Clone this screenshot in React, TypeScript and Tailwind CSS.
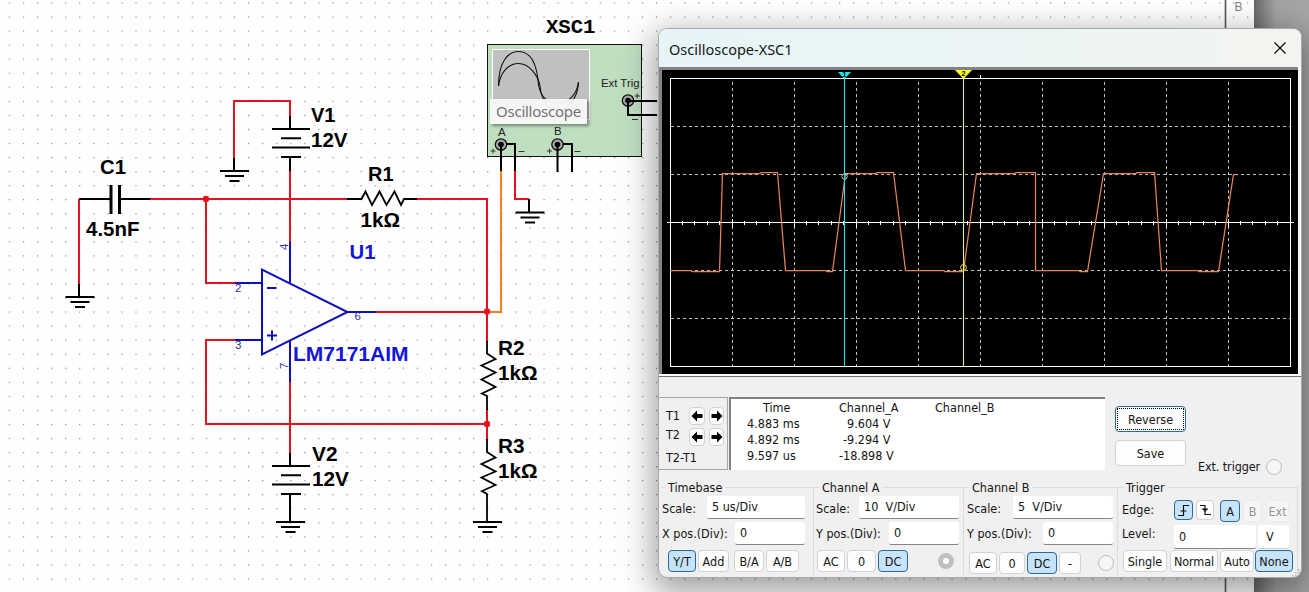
import type { ReactNode } from "react";

const RED = "#e0141e";
const BLUE = "#1010b8";

function Ground({ x, y }: { x: number; y: number }) {
  return <path d={`M${x - 14.5} ${y}h29M${x - 9.5} ${y + 5}h19M${x - 5} ${y + 10}h10`} stroke="#000" strokeWidth="2" />;
}

function Battery({ x, y }: { x: number; y: number }) {
  return <path d={`M${x - 18} ${y}h38M${x - 9} ${y + 9.3}h20M${x - 18} ${y + 18.6}h38M${x - 9} ${y + 28}h20`} stroke="#000" strokeWidth="2" />;
}

function Label({ x, y, w, fill = "#000", children }: { x: number; y: number; w: number; fill?: string; children: string }) {
  return (
    <text x={x} y={y} textLength={w} lengthAdjust="spacingAndGlyphs" fill={fill} className="font-['Liberation_Sans',sans-serif] text-[20.5px] font-bold">
      {children}
    </text>
  );
}

function Terminal({ x, y }: { x: number; y: number }) {
  return (
    <g>
      <circle cx={x} cy={y} r="5.7" fill="#a8a8a8" stroke="#111" strokeWidth="1.3" />
      <circle cx={x} cy={y} r="2.8" fill="#000" />
    </g>
  );
}

function Schematic() {
  return (
    <svg width="1309" height="592" className="absolute left-0 top-0" fill="none">
      <defs>
        <pattern id="dots" x="8.8" y="2.4" width="14.07" height="14.05" patternUnits="userSpaceOnUse">
          <rect width="1.2" height="1.2" fill="#868686" />
        </pattern>
        <linearGradient id="edge">
          <stop offset="0" stopColor="#686868" />
          <stop offset="0.4" stopColor="#a2a2a2" />
          <stop offset="1" stopColor="#a6a6a6" />
        </linearGradient>
      </defs>
      <rect width="1254" height="592" fill="url(#dots)" />
      <path d="M1225.5 0V592" stroke="#555" strokeWidth="1.6" />
      <rect x="1254" width="55" height="592" fill="url(#edge)" />
      <text x="1234.5" y="10.8" fill="#808080" className="font-['Liberation_Sans',sans-serif] text-[12px]">B</text>

      <g stroke={RED} strokeWidth="2">
        <path d="M79 199V285M150 199H348M206 199V283H235M234 158V101H290V116M290 171V242M417 199H487V342" />
        <path d="M376 312H487M235 340H206V424H487M290 382V454M487 409V440M515 171V199H529" />
      </g>
      <path d="M501 171V312H487" stroke="#f08020" strokeWidth="2" />
      <g fill="#e8101c">
        <circle cx="206" cy="199" r="3.2" />
        <circle cx="487" cy="311.5" r="3.2" />
        <circle cx="487" cy="424" r="3.2" />
      </g>

      <g stroke="#000" strokeWidth="2">
        <path d="M79 199H111M119 199H150M79 284V297M234 158V171M290 116V129M290 157V171M529 199V212" />
        <path d="M111 185V214M119.5 185V214" strokeWidth="3" />
        <path d="M347 199H361.5L365.5 191.5L372 205L379.5 191.5L386.5 205L394.5 191.5L401 205L404 199H417" strokeWidth="1.8" />
        <path d="M487 341V353.5L495.5 359L481.5 365.5L495.5 372.5L481.5 379.5L495.5 387L482 393.5L487 396V410" strokeWidth="1.8" />
        <path d="M487 439V452L495.5 457.5L481.5 464L495.5 471.5L481.5 477.5L495.5 485L482 491L487 494V522" strokeWidth="1.8" />
        <path d="M290 453V466M290 494V522" />
      </g>
      <Ground x={80} y={297} />
      <Ground x={234.5} y={171} />
      <Ground x={530} y={212.5} />
      <Ground x={290.5} y={522} />
      <Ground x={487.5} y={522} />
      <Battery x={290} y={129} />
      <Battery x={290} y={466} />

      <g stroke={BLUE} strokeWidth="2">
        <path d="M262 269.5V354.5L347.5 312Z" />
        <path d="M290 242V283M235 283H262M235 340H262M347 312H376M290 341V382M267 288H276.5M267 335.5H277M272 330.5V340.5" />
      </g>
      <g fill="#3030a0" className="font-['Liberation_Sans',sans-serif] text-[11.5px]">
        <text x="235" y="292">2</text>
        <text x="235" y="349">3</text>
        <text x="354.500" y="320">6</text>
        <text transform="translate(288 250) rotate(-90)">4</text>
        <text transform="translate(288 369) rotate(-90)">7</text>
      </g>

      <Label x={100} y={173.5} w={26}>C1</Label>
      <Label x={86} y={236} w={53.5}>4.5nF</Label>
      <Label x={311} y={122} w={24.5}>V1</Label>
      <Label x={311} y={147} w={36.5}>12V</Label>
      <Label x={368} y={181} w={25.5}>R1</Label>
      <Label x={360.5} y={226.500} w={39.5}>1kΩ</Label>
      <Label x={349.5} y={259} w={26} fill="#1414dc">U1</Label>
      <Label x={293} y={361} w={115.5} fill="#1414dc">LM7171AIM</Label>
      <Label x={498} y={355} w={26.5}>R2</Label>
      <Label x={498} y={379.5} w={39.5}>1kΩ</Label>
      <Label x={498} y={453} w={26.5}>R3</Label>
      <Label x={498} y={478} w={39.5}>1kΩ</Label>
      <Label x={312} y={461} w={25.5}>V2</Label>
      <Label x={312} y={486} w={37}>12V</Label>
      <text x="546" y="33" textLength="49.5" lengthAdjust="spacingAndGlyphs" fill="#000" className="font-['Liberation_Mono',monospace] text-[19.5px] font-bold">XSC1</text>

      <rect x="487.5" y="44.5" width="154" height="112" fill="#c0dfc1" stroke="#111" />
      <rect x="492.500" y="49.500" width="97" height="70" fill="#c0c0c0" stroke="#fff" />
      <g stroke="#111" strokeWidth="1.1">
        <path d="M498.500 86C498.500 62 508 51.500 518.500 51.500C530 51.500 537 63 538.500 85C540 93 544 103 558 103C570 103 577 93 578.500 82" />
        <path d="M498.500 86C500 73 508 63.500 518.500 63.500C529 63.500 538 75 540 86C541 100 550 112 560 110C572 106 578 95 578.500 82" />
      </g>
      <g fill="#222" className="font-['Liberation_Sans',sans-serif] text-[11.5px]">
        <text x="601" y="87" textLength="38.5" lengthAdjust="spacingAndGlyphs">Ext Trig</text>
        <text x="498" y="136">A</text>
        <text x="554" y="134.500">B</text>
      </g>
      <Terminal x={501} y={144.5} />
      <Terminal x={557.5} y={144.5} />
      <Terminal x={628} y={100.500} />
      <g stroke="#000" strokeWidth="2">
        <path d="M501 144V171M506 144H515V171M557.500 144V172M563 144H572V172M628 101H657M628 101V115H657" />
      </g>
      <path d="M490.500 151H495.500M493 148.500V153.500M518.500 151.500H524.500M547 151H552M549.500 148.500V153.500M574.500 151.500H580.500M634.500 96H640M637.200 93.500V98.500M632 119.500H638" stroke="#333" strokeWidth="1" />
    </svg>
  );
}

const TRACE =
  "670,270.5 691,270.5 692,271.5 719.5,271.5 722.5,173.5 760,173.5 761,172.5 777.5,172.5 785.5,270.5 826,270.5 827,271.5 832.5,271.5 845.5,173.5 876,173.5 877,172.5 893.5,172.5 905.5,270.5 944,270.5 945,271.5 963.5,271.5 976.5,173.5 1015,173.5 1016,172.5 1035.5,172.5 1035.5,270.5 1079,270.5 1080,271.5 1087.5,271.5 1103.5,173.5 1136,173.5 1137,172.5 1154.5,172.5 1161.5,270.5 1198,270.5 1199,271.5 1218.5,271.5 1233.5,174.5 1236,174.5";

const COLS = [732.5, 794.5, 856.5, 918.5, 980.5, 1042.5, 1104.5, 1166.5, 1228.5];
const ROWS = [126.5, 174.5, 270.5, 318.5];
const TICKS = Array.from({ length: 49 }, (_, i) => i + 1);

function Screen() {
  return (
    <svg width="636" height="304" viewBox="662 70 636 304" className="block bg-black" fill="none">
      <g stroke="#c0c0c0" strokeWidth="1" strokeDasharray="3 3">
        {COLS.map((x) => <path key={x} d={`M${x} 82V366`} />)}
        {ROWS.map((y) => <path key={y} d={`M671 ${y}H1290`} />)}
      </g>
      <rect x="670.5" y="78.500" width="620" height="288" stroke="#fff" />
      <path d="M667 222.500H1294M980.500 75V79" stroke="#fff" />
      {TICKS.map((i) => (
        <path key={i} d={`M${Math.floor(670 + i * 12.4) + 0.5} ${i % 5 ? "221V225" : "219V227"}`} stroke="#fff" />
      ))}
      <polyline points={TRACE} stroke="#e4855c" strokeWidth="1.25" />
      <path d="M844.500 78V366" stroke="#3cd6dc" strokeWidth="1.1" />
      <path d="M963.500 78V366" stroke="#ecec86" strokeWidth="1.1" />
      <path d="M838 72H851L844.500 79Z" fill="#20e8e8" />
      <path d="M955 70H972L963.500 79Z" fill="#ffff20" />
      <g fill="#000" className="font-['Liberation_Sans',sans-serif] text-[7px] font-bold">
        <text x="842.500" y="77">1</text>
        <text x="961.500" y="76">2</text>
      </g>
      <circle cx="844.500" cy="176.500" r="2.700" stroke="#a8d4d4" />
      <circle cx="963.500" cy="267.500" r="2.900" stroke="#e8e820" />
    </svg>
  );
}

function Btn({ on, off, className, children }: { on?: boolean; off?: boolean; className: string; children: ReactNode }) {
  const look = on
    ? "border-[#2a6a98] bg-[#c6e3fa]"
    : off
      ? "border-[#ececec] bg-[#f5f5f5] text-[#969696]"
      : "border-[#d2d2d2] bg-[#fdfdfd]";
  return <button className={`flex shrink-0 items-center justify-center rounded-[4px] border pt-px whitespace-pre ${look} ${className}`}>{children}</button>;
}

function Field({ className, children }: { className: string; children: ReactNode }) {
  return <div className={`flex shrink-0 items-center rounded-[2px] border-b border-[#868686] bg-white pl-[5px] whitespace-pre ${className}`}>{children}</div>;
}

function Group({ title, className, titleClass, children }: { title: string; className: string; titleClass: string; children: ReactNode }) {
  return (
    <section className={`flex h-[96px] shrink-0 flex-col ${className}`}>
      <div className="flex h-[16px] items-center">
        <i className={`h-px bg-[#dcdcdc] ${titleClass}`} />
        <span className="px-[3px] pt-px">{title}</span>
        <i className="h-px flex-1 bg-[#dcdcdc]" />
      </div>
      <div className="-mt-2 flex flex-1 flex-col border-r border-[#dcdcdc] pt-2">{children}</div>
    </section>
  );
}

function Arrow({ flip }: { flip?: boolean }) {
  return (
    <svg width="12" height="12" viewBox="0 0 12 12" className={flip ? "-scale-x-100" : ""}>
      <path d="M0.500 6L6 0.500V4H11.500V8H6V11.500Z" fill="#000" />
    </svg>
  );
}

function ArrowPair() {
  return (
    <div className="flex gap-1">
      <Btn className="h-[18px] w-[16px] pt-0!"><Arrow /></Btn>
      <Btn className="h-[18px] w-[15px] pt-0!"><Arrow flip /></Btn>
    </div>
  );
}

function Scope() {
  return (
    <div className="absolute left-[659px] top-[29px] flex h-[548px] w-[642px] flex-col overflow-hidden rounded-[8px] bg-[#f0f0f0] font-['DejaVu_Sans_Condensed','DejaVu_Sans',sans-serif] text-[12.5px] leading-[16px] tracking-[0px] text-[#151515] [font-stretch:condensed] shadow-[0_0_0_1px_#a5abac,0_10px_32px_6px_rgba(0,0,0,0.36)]">
      <header className="flex h-[38px] shrink-0 items-center justify-between bg-linear-to-r from-[#e7f5f8] via-[#ebf5f5] to-[#f3f4ef] pl-[10px] pr-[14px]">
        <span className="pt-px font-['Noto_Sans',sans-serif] text-[14.5px] leading-5 tracking-[0px]">Oscilloscope-XSC1</span>
        <svg width="14" height="14" viewBox="0 0 14 14"><path d="M1.500 1.500L12.500 12.500M12.500 1.500L1.500 12.500" stroke="#111" strokeWidth="1.300" /></svg>
      </header>
      <div className="h-[310px] shrink-0 border-b border-[#707070] bg-[#f8f8f8]">
        <div className="h-[307px] w-[639px] border-l-[3px] border-t-[3px] border-[#848484]"><Screen /></div>
      </div>

      <div className="flex h-[103px] shrink-0 pt-[20px]">
        <div className="flex h-[73px] w-[69px] shrink-0 border border-l-0 border-[#a6a6a6]">
          <div className="flex w-[30px] shrink-0 flex-col pl-[7px] pt-[10px] whitespace-nowrap">
            <span>T1</span><span className="mt-[3px]">T2</span><span className="mt-[7px]">T2-T1</span>
          </div>
          <div className="flex flex-col gap-[3px] pt-[9px]"><ArrowPair /><ArrowPair /></div>
        </div>
        <div className="ml-[1px] flex h-[73px] w-[376px] shrink-0 border-l-2 border-t-2 border-[#808080] bg-white pt-px whitespace-pre">
          <div className="ml-[16px] flex w-[92px] flex-col"><span className="pl-[16px]">Time</span><span>4.883 ms</span><span>4.892 ms</span><span>9.597 us</span></div>
          <div className="flex w-[96px] flex-col"><span>Channel_A</span><span className="pl-[8px]">9.604 V</span><span className="pl-[4px]">-9.294 V</span><span>-18.898 V</span></div>
          <div>Channel_B</div>
        </div>
        <div className="ml-[10px] flex flex-col gap-[8px] pt-[9px]">
          <button className="flex h-[26px] w-[71px] items-center justify-center rounded-[4px] border border-[#286c98] bg-[#fdfdfd] p-px">
            <span className="flex h-full w-full items-center justify-center border border-dotted border-black pt-px">Reverse</span>
          </button>
          <Btn className="h-[26px] w-[71px]">Save</Btn>
        </div>
        <div className="ml-[12px] flex h-[16px] items-center gap-[6px] self-start mt-[62px] whitespace-nowrap">
          <span className="w-[62px] tracking-[-0.1px]">Ext. trigger</span>
          <i className="size-[16px] rounded-full border border-[#bdbdbd] bg-[#f6f6f6]" />
        </div>
      </div>

      <div className="flex pl-[1px] -mt-px">
        <Group title="Timebase" className="w-[154px]" titleClass="ml-[2px] w-[3px]">
          <div className="flex items-center pl-[2px] pt-px"><span className="w-[45px] pt-[3px]">Scale:</span><Field className="h-[23px] w-[98px]">5 us/Div</Field></div>
          <div className="mt-[3px] flex items-center pl-[2px]"><span className="w-[73px] whitespace-nowrap">X pos.(Div):</span><Field className="h-[23px] w-[70px]">0</Field></div>
          <div className="mt-[5px] flex pl-[8px]">
            <Btn on className="h-[22px] w-[28px]">Y/T</Btn>
            <Btn className="ml-[2px] h-[22px] w-[31px]">Add</Btn>
            <Btn className="ml-[5px] h-[22px] w-[30px]">B/A</Btn>
            <Btn className="ml-[2px] h-[22px] w-[33px]">A/B</Btn>
          </div>
        </Group>
        <Group title="Channel A" className="w-[150px]" titleClass="w-[5px]">
          <div className="flex items-center pl-[2px] pt-px"><span className="w-[43px] pt-[3px]">Scale:</span><Field className="h-[23px] w-[100px]">10  V/Div</Field></div>
          <div className="mt-[3px] flex items-center pl-[2px]"><span className="w-[73px] whitespace-nowrap">Y pos.(Div):</span><Field className="h-[23px] w-[70px]">0</Field></div>
          <div className="mt-[5px] flex items-center pl-[3px]">
            <Btn className="h-[22px] w-[28px]">AC</Btn>
            <Btn className="ml-[2px] h-[22px] w-[29px]">0</Btn>
            <Btn on className="ml-[2px] h-[22px] w-[30px]">DC</Btn>
            <i className="ml-[30px] size-[16px] rounded-full border-[5px] border-[#bfbfbf] bg-white" />
          </div>
        </Group>
        <Group title="Channel B" className="w-[154px]" titleClass="w-[5px]">
          <div className="flex items-center pl-[3px] pt-px"><span className="w-[46px] pt-[3px]">Scale:</span><Field className="h-[23px] w-[100px]">5  V/Div</Field></div>
          <div className="mt-[3px] flex items-center pl-[3px]"><span className="w-[76px] whitespace-nowrap">Y pos.(Div):</span><Field className="h-[23px] w-[70px]">0</Field></div>
          <div className="mt-[7px] flex items-center pl-[5px]">
            <Btn className="h-[22px] w-[28px]">AC</Btn>
            <Btn className="ml-[2px] h-[22px] w-[26px]">0</Btn>
            <Btn on className="ml-[2px] h-[22px] w-[30px]">DC</Btn>
            <Btn className="ml-[2px] h-[22px] w-[22px]">-</Btn>
            <i className="ml-[17px] size-[16px] shrink-0 rounded-full border border-[#bdbdbd] bg-[#f6f6f6]" />
          </div>
        </Group>
        <Group title="Trigger" className="w-[180px]" titleClass="w-[5px]">
          <div className="flex items-start pl-[4px] pt-[5px]">
            <span className="w-[52px] pt-[2px]">Edge:</span>
            <Btn on className="h-[20px] w-[19px] pt-0!">
              <svg width="13" height="13" viewBox="0 0 13 13" fill="none" stroke="#111" strokeWidth="1.200"><path d="M1 11.500H6.500V1.500H12M3.500 7H9.500" /></svg>
            </Btn>
            <Btn className="ml-[3px] h-[20px] w-[18px] pt-0!">
              <svg width="13" height="13" viewBox="0 0 13 13" fill="none" stroke="#111" strokeWidth="1.200"><path d="M1 1.500H6V10.500H12M3 5H9" /><path d="M3.500 5H8.500L6 8Z" fill="#111" stroke="none" /></svg>
            </Btn>
            <Btn on className="ml-[6px] h-[22px] w-[20px]">A</Btn>
            <Btn off className="ml-[3px] h-[22px] w-[19px]">B</Btn>
            <Btn off className="ml-[4px] h-[22px] w-[23px]">Ext</Btn>
          </div>
          <div className="mt-[3px] flex items-center pl-[4px]">
            <span className="w-[52px] pb-[6px]">Level:</span>
            <Field className="h-[24px] w-[82px]">0</Field>
            <Field className="ml-[2px] h-[24px] w-[31px] border-[#d0d0d0]! pl-[8px]!">V</Field>
          </div>
          <div className="mt-px flex pl-[5px]">
            <Btn className="h-[22px] w-[44px]">Single</Btn>
            <Btn className="ml-[3px] h-[22px] w-[48px] tracking-[-0.15px]">Normal</Btn>
            <Btn className="ml-[2px] h-[22px] w-[34px] tracking-[-0.15px]">Auto</Btn>
            <Btn on className="ml-px h-[22px] w-[38px]">None</Btn>
          </div>
        </Group>
      </div>
      <svg width="9" height="9" className="absolute bottom-0 right-0" fill="#b4b4b4">
        <path d="M6 1h1.500v1.500H6zM3 4h1.500v1.500H3zM6 4h1.500v1.500H6zM0 7h1.500v1.500H0zM3 7h1.500v1.500H3z" />
      </svg>
    </div>
  );
}

export default function App() {
  return (
    <main className="relative h-[592px] w-[1309px] overflow-hidden bg-[#fefefe]">
      <Schematic />
      <div className="absolute left-[490px] top-[99px] flex h-[25px] w-[97px] items-center justify-center bg-[#f8f8f8]/95 font-['Noto_Sans',sans-serif] text-[15px] tracking-[-0.25px] text-[#747474] shadow-[2px_2px_3px_rgba(0,0,0,0.4)]">
        Oscilloscope
      </div>
      <Scope />
    </main>
  );
}
